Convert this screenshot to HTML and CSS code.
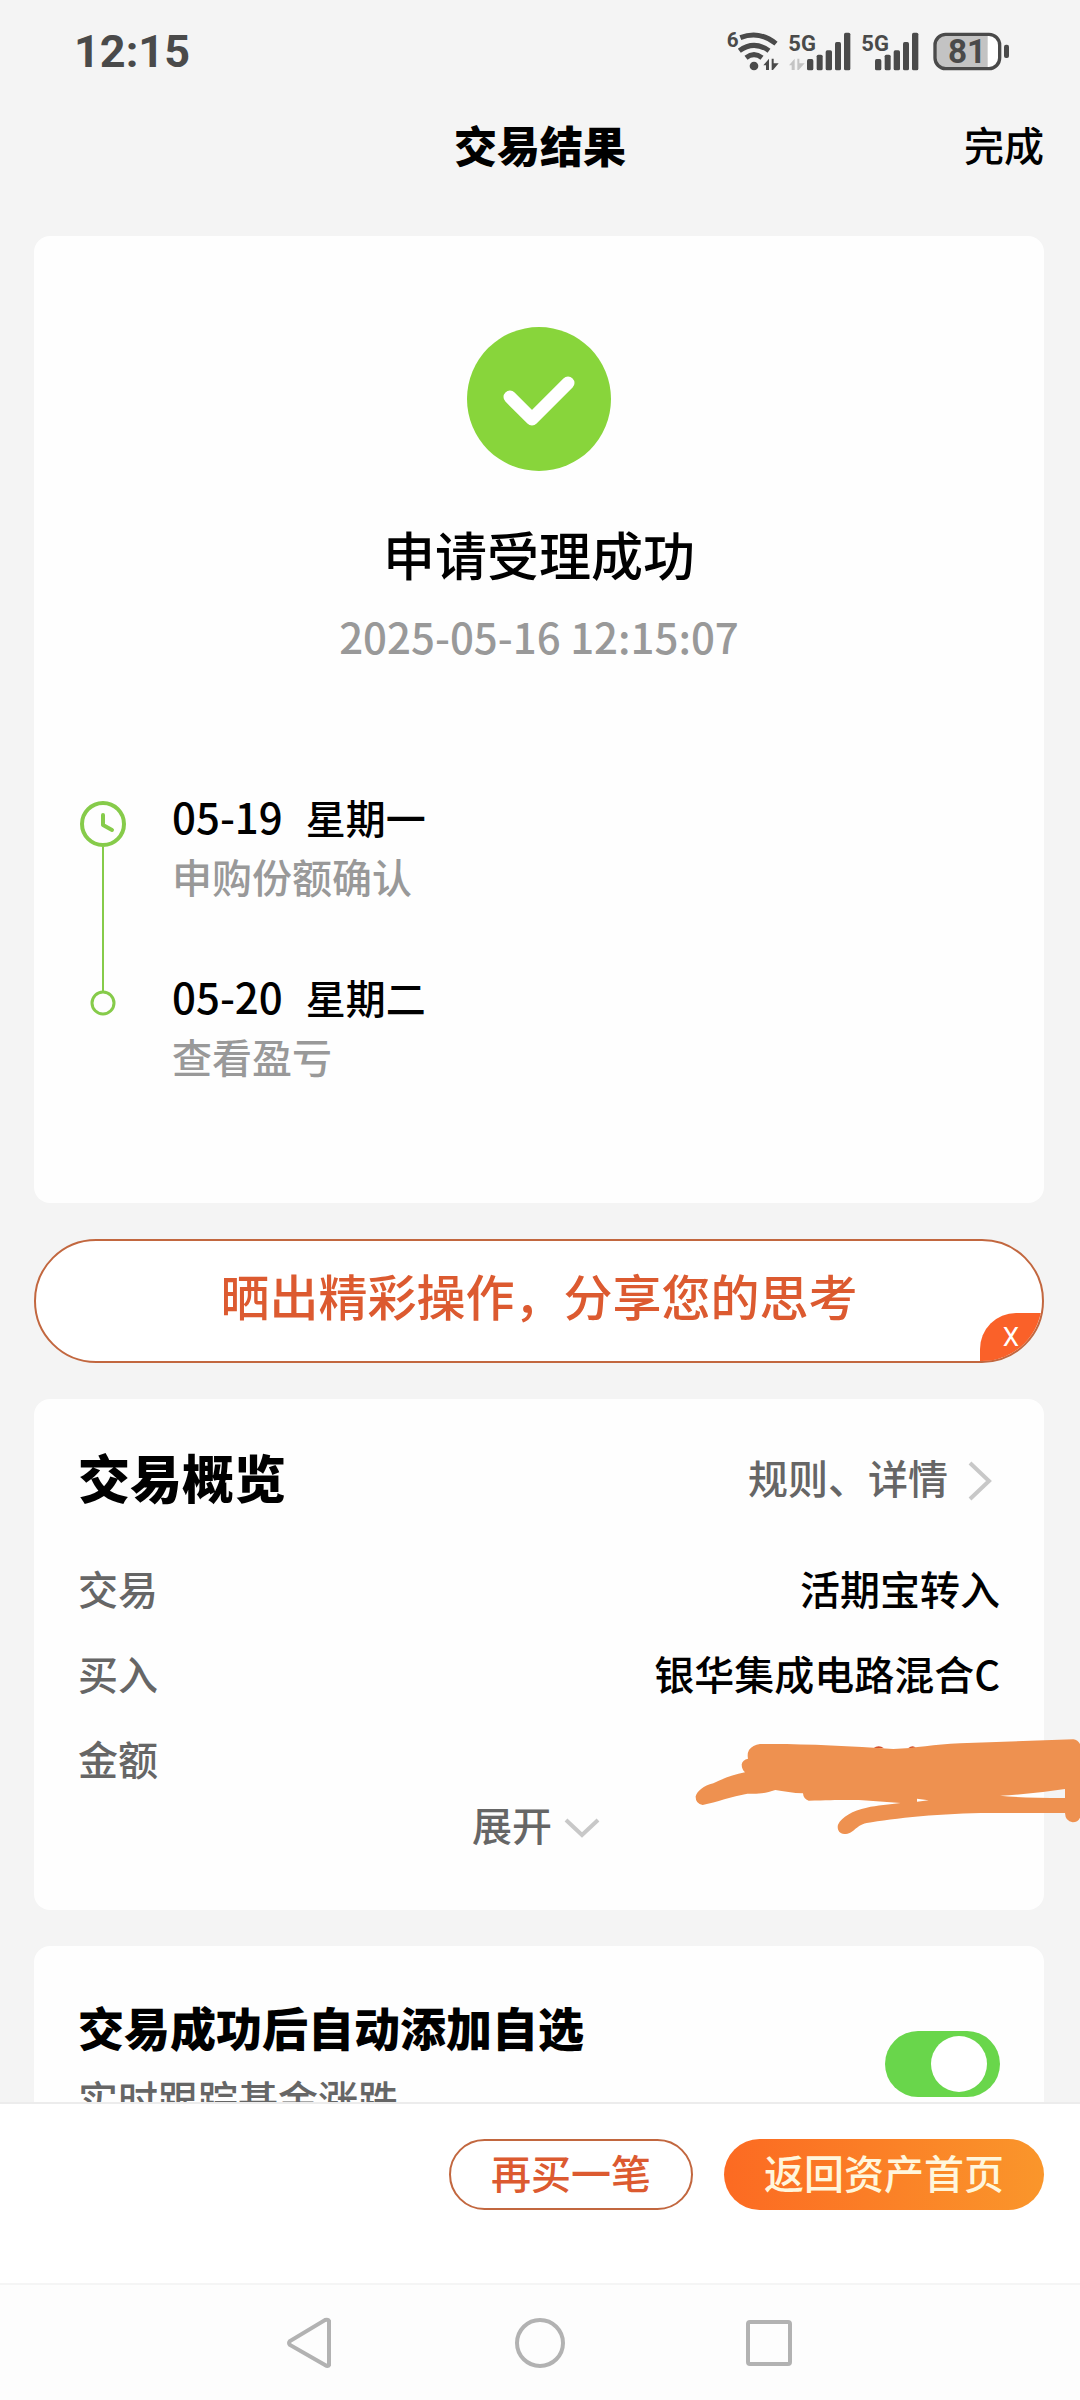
FILE: index.html
```html
<!DOCTYPE html>
<html lang="zh-CN">
<head>
    <meta charset="UTF-8">
    <meta name="viewport" content="width=device-width, initial-scale=1.0">
    <title>交易结果</title>
    <link rel="stylesheet" href="styles.css">
</head>
<body>
    <div class="status-bar">
        <span class="clock">12:15</span>
        <svg class="status-icons" viewBox="78 84 852 126" role="img" aria-label="Wi-Fi 6, 5G, 81%">
            <g fill="#4a4a4a" font-family="Roboto, sans-serif" font-weight="700">
                <text x="80" y="138" font-size="62">6</text>
                <text x="265" y="151" font-size="66">5G</text>
                <text x="484" y="151" font-size="66">5G</text>
            </g>
            <!-- wifi -->
            <g fill="none" stroke="#4a4a4a" stroke-width="15">
                <path d="M121 110Q178 88 228 128"/>
                <path d="M118 149Q162 117 207 149"/>
                <path d="M138 170Q162 152 186 170"/>
            </g>
            <circle cx="162" cy="195" r="13" fill="#4a4a4a"/>
            <path d="M190 193L207 173V207H198V193ZM215 173H221V187H236L219 207H215Z" fill="#4a4a4a"/>
            <path d="M267 193L284 173V207H275V193ZM292 173H298V187H314L296 207H292Z" fill="#c4c4c4"/>
            <!-- signal bars -->
            <g fill="#4a4a4a">
                <rect x="321" y="174" width="19" height="34" rx="5"/>
                <rect x="350" y="161" width="18" height="47" rx="5"/>
                <rect x="377" y="148" width="19" height="60" rx="5"/>
                <rect x="405" y="123" width="18" height="85" rx="5"/>
                <rect x="432" y="95" width="19" height="113" rx="5"/>
                <rect x="525" y="174" width="19" height="34" rx="5"/>
                <rect x="554" y="161" width="18" height="47" rx="5"/>
                <rect x="581" y="148" width="19" height="60" rx="5"/>
                <rect x="609" y="123" width="18" height="85" rx="5"/>
                <rect x="636" y="95" width="19" height="113" rx="5"/>
            </g>
            <!-- battery -->
            <rect x="705" y="100" width="194" height="103" rx="32" fill="#fff"/>
            <path d="M863 100H737Q705 100 705 132V171Q705 203 737 203H863Z" fill="#c3c3c3"/>
            <rect x="705" y="100" width="194" height="103" rx="32" fill="none" stroke="#4a4a4a" stroke-width="10"/>
            <rect x="912" y="131" width="15" height="40" rx="6" fill="#4a4a4a"/>
            <text x="801" y="187" font-size="100" font-family="Roboto, sans-serif" font-weight="700" text-anchor="middle" fill="#4a4a4a">81</text>
        </svg>
    </div>

    <header class="header">
        <h1>交易结果</h1>
        <button class="done" type="button">完成</button>
    </header>

    <main class="content">
        <section class="card result">
            <svg class="result-icon" viewBox="0 0 144 144" aria-hidden="true">
                <circle cx="72" cy="72" r="72" fill="#88d53b"/>
                <path d="M43 70L65 92L101 56" fill="none" stroke="#fff" stroke-width="13" stroke-linecap="round" stroke-linejoin="round"/>
            </svg>
            <h2>申请受理成功</h2>
            <time class="result-time">2025-05-16 12:15:07</time>

            <div class="timeline">
                <svg class="timeline-track" viewBox="0 0 48 240" aria-hidden="true">
                    <g fill="none" stroke="#86cb4a">
                        <circle cx="25" cy="38" r="21" stroke-width="4"/>
                        <path d="M25 29V39L34 44" stroke-width="4" stroke-linecap="round" stroke-linejoin="round"/>
                        <path d="M25 61V205" stroke-width="2"/>
                        <circle cx="25" cy="217" r="11" stroke-width="3"/>
                    </g>
                </svg>
                <ol class="steps">
                    <li>
                        <p class="step-date"><time>05-19</time><span>星期一</span></p>
                        <p class="step-text">申购份额确认</p>
                    </li>
                    <li>
                        <p class="step-date"><time>05-20</time><span>星期二</span></p>
                        <p class="step-text">查看盈亏</p>
                    </li>
                </ol>
            </div>
        </section>

        <div class="share">
            <a class="share-link" href="#">晒出精彩操作，分享您的思考</a>
            <button class="share-close" type="button" aria-label="关闭">X</button>
        </div>

        <section class="card overview">
            <div class="overview-head">
                <h2>交易概览</h2>
                <a class="rules" href="#">规则、详情
                    <svg class="arrow-right" viewBox="0 0 24 40" aria-hidden="true">
                        <path d="M2 2L21 20L2 38" fill="none" stroke="#c8c8c8" stroke-width="4"/>
                    </svg>
                </a>
            </div>
            <dl class="details">
                <div class="row"><dt>交易</dt><dd>活期宝转入</dd></div>
                <div class="row"><dt>买入</dt><dd>银华集成电路混合C</dd></div>
                <div class="row">
                    <dt>金额</dt>
                    <dd>
                        <!-- amount hidden by brush strokes -->
                        <svg class="scribble" viewBox="0 0 1260 450" aria-hidden="true">
                            <path d="M640 142Q656 130 672 142ZM744 142Q758 130 768 140Z" fill="#d4502c"/>
                            <path fill="#ee9150" fill-rule="evenodd" d="M300 129C410 127 560 134 700 144C770 142 820 130 900 127L1240 115Q1256 117 1262 134V345Q1256 364 1238 364Q1216 361 1215 336H1000C860 335 700 352 620 366C585 374 582 399 553 399C535 398 531 382 534 371C545 347 578 329 620 320C650 313 690 310 722 306L650 301C600 296 560 296 446 299Q430 294 429 277C400 277 370 270 346 267C320 276 300 280 262 278C215 286 170 303 128 312Q106 308 107 286C112 270 130 254 160 247C190 232 220 221 255 214Q245 205 245 190Q248 176 264 173Q261 158 267 147Q278 132 300 129ZM1020 284Q1080 291 1215 291V264Q1120 279 1020 284ZM771 293V302L806 298Z"/>
                        </svg>
                    </dd>
                </div>
            </dl>
            <button class="expand" type="button">展开
                <svg class="arrow-down" viewBox="0 0 36 20" aria-hidden="true">
                    <path d="M2 2L18 17L34 2" fill="none" stroke="#c8c8c8" stroke-width="4"/>
                </svg>
            </button>
        </section>

        <section class="card favorite">
            <label for="autoAdd">
                <strong>交易成功后自动添加自选</strong>
                <span>实时跟踪基金涨跌</span>
            </label>
            <input class="switch" type="checkbox" id="autoAdd" checked>
        </section>
    </main>

    <footer class="actions">
        <button class="btn btn-outline" type="button">再买一笔</button>
        <button class="btn btn-primary" type="button">返回资产首页</button>
    </footer>

    <nav class="system-nav">
        <button type="button" aria-label="返回">
            <svg viewBox="0 0 56 56"><path d="M47 6V50Q46 52 43 50L8 30Q6 28 8 26L43 5Q46 4 47 6Z"/></svg>
        </button>
        <button type="button" aria-label="主页">
            <svg viewBox="0 0 56 56"><circle cx="28" cy="28" r="23"/></svg>
        </button>
        <button type="button" aria-label="最近任务">
            <svg viewBox="0 0 56 56"><rect x="6" y="7" width="42" height="42" rx="2"/></svg>
        </button>
    </nav>
</body>
</html>
```
FILE: styles.css
```css
:root {
    --bg-color: #f4f4f4;
    --card-bg: #fefefe;
    --text-color: #000;
    --text-secondary: #666;
    --text-muted: #999;
    --accent-color: #dc5a30;
    --accent-border: #c2673f;
    --green: #69d64b;
}

* {
    box-sizing: border-box;
}

body {
    margin: 0;
    height: 100vh;
    display: flex;
    flex-direction: column;
    overflow: hidden;
    background-color: var(--bg-color);
    color: var(--text-color);
    font-family: "Noto Sans CJK SC", sans-serif;
    font-size: 40px;
    font-weight: 500;
    line-height: 60px;
}

h1, h2, p, ol, dl, dd {
    margin: 0;
    padding: 0;
}

ol {
    list-style: none;
}

a {
    color: inherit;
    text-decoration: none;
}

button {
    padding: 0;
    border: none;
    background: none;
    color: inherit;
    font: inherit;
    cursor: pointer;
}

svg {
    display: block;
}

/* top of the screen */
.status-bar {
    flex: none;
    display: flex;
    justify-content: space-between;
    align-items: center;
    height: 102px;
    padding: 0 70px 2px 74px;
}

.clock {
    padding-top: 3px;
    font-family: Roboto, sans-serif;
    font-size: 45px;
    font-weight: 700;
    color: #4a4a4a;
}

.status-icons {
    width: 284px;
    height: 42px;
    overflow: visible;
}

.header {
    flex: none;
    display: grid;
    grid-template-columns: 1fr auto 1fr;
    align-items: center;
    height: 90px;
    padding: 0 36px 6px;
}

.header h1 {
    grid-column: 2;
    font-size: 43px;
    font-weight: 900;
}

.done {
    justify-self: end;
}

.content {
    flex: 1;
    min-height: 0;
    overflow: hidden;
    display: flex;
    flex-direction: column;
    gap: 36px;
    padding: 44px 36px 0 34px;
}

.card {
    flex: none;
    border-radius: 16px;
    background-color: var(--card-bg);
}

.result {
    display: flex;
    flex-direction: column;
    align-items: center;
    padding: 91px 44px 117px;
}

.result-icon {
    width: 144px;
    height: 144px;
}

.result h2 {
    margin-top: 48px;
    font-size: 52px;
    line-height: 70px;
    font-weight: 500;
}

.result-time {
    margin-top: 17px;
    font-size: 42px;
    color: var(--text-muted);
}

.timeline {
    align-self: stretch;
    display: flex;
    gap: 46px;
    margin-top: 120px;
}

.timeline-track {
    width: 48px;
    height: 240px;
}

.steps {
    display: flex;
    flex-direction: column;
    gap: 60px;
}

.step-date {
    display: flex;
    align-items: baseline;
    height: 60px;
    gap: 23px;
}

.step-date time {
    font-size: 42px;
}

.step-text {
    color: var(--text-muted);
}

.share {
    flex: none;
    position: relative;
    overflow: hidden;
    border: 2px solid var(--accent-border);
    border-radius: 63px;
    background-color: #fff;
}

.share-link {
    display: block;
    padding: 24px 0 36px;
    text-align: center;
    font-size: 49px;
    color: var(--accent-color);
}

/* sits in the corner of the pill */
.share-close {
    position: absolute;
    right: 0;
    bottom: 0;
    width: 62px;
    height: 48px;
    border-radius: 36px 0 0 0;
    background-color: #fa6129;
    color: #fff;
    font-family: Roboto, sans-serif;
    font-size: 26px;
    font-weight: 400;
    line-height: 44px;
}

.overview {
    padding: 48px 44px 56px;
}

.overview-head {
    display: flex;
    justify-content: space-between;
    align-items: center;
    margin-bottom: 38px;
}

.overview-head h2 {
    font-size: 52px;
    font-weight: 900;
}

.rules {
    display: flex;
    align-items: center;
    gap: 20px;
    padding-right: 8px;
    color: var(--text-secondary);
}

.arrow-right,
.arrow-down {
    margin-top: 8px;
}

.arrow-right {
    width: 24px;
    height: 40px;
}

.row {
    position: relative;
    display: flex;
    justify-content: space-between;
    align-items: center;
    height: 85px;
}

.row dt {
    color: var(--text-secondary);
}

.scribble {
    position: absolute;
    top: -14px;
    right: -80px;
    width: 420px;
    height: 150px;
}

.expand {
    display: flex;
    align-items: center;
    gap: 12px;
    margin: -6px auto 0;
    padding-right: 6px;
    color: var(--text-secondary);
}

.arrow-down {
    width: 36px;
    height: 20px;
}

.favorite {
    display: flex;
    justify-content: space-between;
    align-items: flex-start;
    padding: 50px 44px;
}

.favorite strong {
    display: block;
    margin-bottom: 12px;
    font-size: 46px;
    font-weight: 900;
}

.favorite span {
    display: block;
    color: var(--text-secondary);
}

.switch {
    appearance: none;
    width: 115px;
    height: 66px;
    margin: 35px 0 0;
    padding: 5px 13px;
    border-radius: 33px;
    background-color: #ddd;
}

.switch::before {
    content: "";
    display: block;
    width: 56px;
    height: 56px;
    border-radius: 50%;
    background-color: #fff;
}

.switch:checked {
    background-color: var(--green);
}

.switch:checked::before {
    margin-left: auto;
}

/* bottom of the screen */
.actions {
    flex: none;
    display: flex;
    justify-content: flex-end;
    align-items: flex-start;
    gap: 31px;
    height: 181px;
    padding: 35px 36px 0;
    border-top: 2px solid #ececec;
    background-color: #fff;
}

.btn {
    height: 71px;
    padding: 0 40px 6px;
    border-radius: 36px;
}

.btn-outline {
    border: 2px solid var(--accent-border);
    color: var(--accent-color);
}

.btn-primary {
    background: linear-gradient(90deg, #fc6a22, #fa962b);
    color: #fff6dc;
}

.system-nav {
    flex: none;
    display: flex;
    justify-content: center;
    align-items: center;
    gap: 174px;
    height: 117px;
    border-top: 2px solid #f5f5f5;
    background-color: #fdfdfd;
}

.system-nav svg {
    width: 56px;
    height: 56px;
    fill: none;
    stroke: #b2b2b2;
    stroke-width: 4;
}
```
